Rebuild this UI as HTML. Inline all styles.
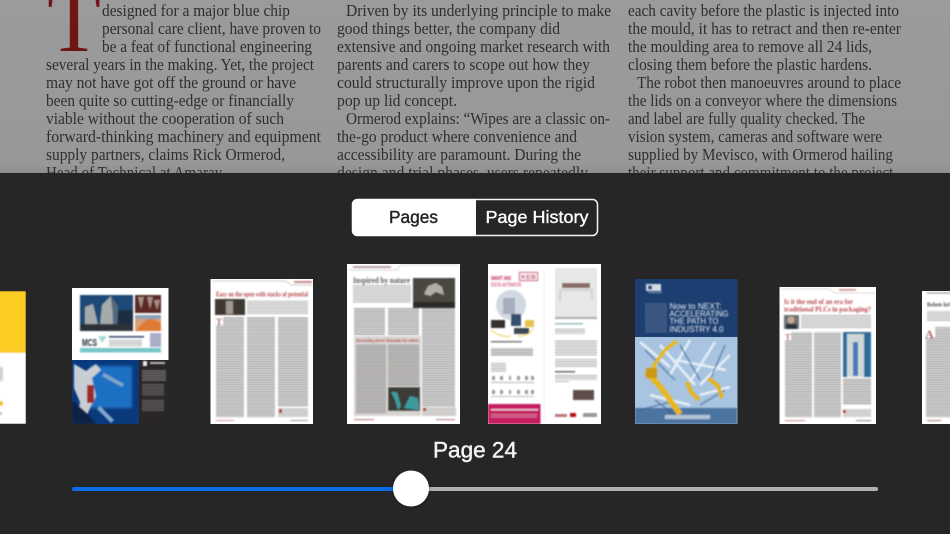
<!DOCTYPE html>
<html><head><meta charset="utf-8"><style>
html,body{margin:0;padding:0;background:#262626;width:950px;height:534px;overflow:hidden}
svg{display:block}
.t text{font-family:"Liberation Serif",serif;font-size:17px;fill:#2e2e2e}
.s{font-family:"Liberation Sans",sans-serif}
.h{font-family:"Liberation Serif",serif;font-weight:bold}
</style></head><body>
<svg width="950" height="534" viewBox="0 0 950 534" xmlns="http://www.w3.org/2000/svg">
<defs>
<pattern id="p" width="12" height="2.3" patternUnits="userSpaceOnUse"><rect width="12" height="1.2" fill="#8a8a8a"/></pattern>
<pattern id="q" width="12" height="2.3" patternUnits="userSpaceOnUse"><rect width="12" height="1.1" fill="#a8a8a8"/></pattern>
<pattern id="w" width="12" height="2.3" patternUnits="userSpaceOnUse"><rect width="12" height="1.1" fill="#e8e8e8"/></pattern>
<filter id="soft" x="-2%" y="-2%" width="104%" height="104%"><feGaussianBlur stdDeviation="0.25"/></filter>
<filter id="b" x="-5%" y="-5%" width="110%" height="110%"><feGaussianBlur stdDeviation="0.8"/></filter>
<filter id="bb" x="-15%" y="-15%" width="130%" height="130%"><feGaussianBlur stdDeviation="1.3"/></filter>
<filter id="ks" x="-30%" y="-30%" width="160%" height="160%"><feDropShadow dx="0" dy="1" stdDeviation="1.5" flood-color="#000" flood-opacity=".4"/></filter>
<clipPath id="top"><rect width="950" height="173"/></clipPath>
<clipPath id="c1"><rect x="0" y="291" width="26" height="133"/></clipPath>
<clipPath id="c2"><rect x="72" y="288" width="96.500" height="136"/></clipPath>
<clipPath id="c3"><rect x="210.500" y="279" width="102.500" height="145"/></clipPath>
<clipPath id="c4"><rect x="347" y="264" width="113" height="160"/></clipPath>
<clipPath id="c5"><rect x="488" y="264" width="113" height="160"/></clipPath>
<clipPath id="c6"><rect x="635" y="279" width="102.500" height="145"/></clipPath>
<clipPath id="c7"><rect x="779.500" y="287" width="96.500" height="137"/></clipPath>
<clipPath id="c8"><rect x="922" y="291" width="28" height="133"/></clipPath>
<linearGradient id="tg" x1="0" y1="0" x2="0" y2="1"><stop offset="0" stop-color="#9b9b9b"/><stop offset=".95" stop-color="#989898"/><stop offset="1" stop-color="#8e8e8e"/></linearGradient>
</defs>

<rect width="950" height="534" fill="#262626"/>
<rect width="950" height="173" fill="url(#tg)"/>

<g clip-path="url(#top)"><g class="t" filter="url(#soft)">
<text x="74" y="51" text-anchor="middle" style="font-size:88px;fill:#6e1219">T</text>
<text x="102" y="16" textLength="188" lengthAdjust="spacingAndGlyphs">designed for a major blue chip</text>
<text x="102" y="34" textLength="219" lengthAdjust="spacingAndGlyphs">personal care client, have proven to</text>
<text x="102" y="52" textLength="210" lengthAdjust="spacingAndGlyphs">be a feat of functional engineering</text>
<text x="46" y="70" textLength="268" lengthAdjust="spacingAndGlyphs">several years in the making. Yet, the project</text>
<text x="46" y="88" textLength="250" lengthAdjust="spacingAndGlyphs">may not have got off the ground or have</text>
<text x="46" y="106" textLength="248" lengthAdjust="spacingAndGlyphs">been quite so cutting-edge or financially</text>
<text x="46" y="124" textLength="238" lengthAdjust="spacingAndGlyphs">viable without the cooperation of such</text>
<text x="46" y="142" textLength="275" lengthAdjust="spacingAndGlyphs">forward-thinking machinery and equipment</text>
<text x="46" y="160" textLength="239" lengthAdjust="spacingAndGlyphs">supply partners, claims Rick Ormerod,</text>
<text x="46" y="178" textLength="179" lengthAdjust="spacingAndGlyphs">Head of Technical at Amaray.</text>

<text x="346" y="16" textLength="265" lengthAdjust="spacingAndGlyphs">Driven by its underlying principle to make</text>
<text x="337" y="34" textLength="223" lengthAdjust="spacingAndGlyphs">good things better, the company did</text>
<text x="337" y="52" textLength="273" lengthAdjust="spacingAndGlyphs">extensive and ongoing market research with</text>
<text x="337" y="70" textLength="253" lengthAdjust="spacingAndGlyphs">parents and carers to scope out how they</text>
<text x="337" y="88" textLength="258" lengthAdjust="spacingAndGlyphs">could structurally improve upon the rigid</text>
<text x="337" y="106" textLength="120" lengthAdjust="spacingAndGlyphs">pop up lid concept.</text>
<text x="346" y="124" textLength="264" lengthAdjust="spacingAndGlyphs">Ormerod explains: “Wipes are a classic on-</text>
<text x="337" y="142" textLength="240" lengthAdjust="spacingAndGlyphs">the-go product where convenience and</text>
<text x="337" y="160" textLength="244" lengthAdjust="spacingAndGlyphs">accessibility are paramount. During the</text>
<text x="337" y="178" textLength="251" lengthAdjust="spacingAndGlyphs">design and trial phases, users repeatedly</text>

<text x="628" y="16" textLength="271" lengthAdjust="spacingAndGlyphs">each cavity before the plastic is injected into</text>
<text x="628" y="34" textLength="273" lengthAdjust="spacingAndGlyphs">the mould, it has to retract and then re-enter</text>
<text x="628" y="52" textLength="244" lengthAdjust="spacingAndGlyphs">the moulding area to remove all 24 lids,</text>
<text x="628" y="70" textLength="244" lengthAdjust="spacingAndGlyphs">closing them before the plastic hardens.</text>
<text x="637" y="88" textLength="264" lengthAdjust="spacingAndGlyphs">The robot then manoeuvres around to place</text>
<text x="628" y="106" textLength="269" lengthAdjust="spacingAndGlyphs">the lids on a conveyor where the dimensions</text>
<text x="628" y="124" textLength="237" lengthAdjust="spacingAndGlyphs">and label are fully quality checked. The</text>
<text x="628" y="142" textLength="254" lengthAdjust="spacingAndGlyphs">vision system, cameras and software were</text>
<text x="628" y="160" textLength="265" lengthAdjust="spacingAndGlyphs">supplied by Mevisco, with Ormerod hailing</text>
<text x="628" y="178" textLength="269" lengthAdjust="spacingAndGlyphs">their support and commitment to the project.</text>
</g></g>

<!-- segmented control -->
<rect x="352.500" y="199.500" width="245" height="36" rx="5" fill="#262626" stroke="#f4f4f4" stroke-width="1.500"/>
<path d="M357 199H476V236H357a5 5 0 0 1-5-5V204a5 5 0 0 1 5-5z" fill="#fff"/>
<text class="s" x="413.500" y="223" text-anchor="middle" font-size="17.500" fill="#222" stroke="#222" stroke-width=".4" textLength="49" lengthAdjust="spacingAndGlyphs">Pages</text>
<text class="s" x="485.500" y="223" font-size="17.500" fill="#fff" stroke="#fff" stroke-width=".35" textLength="103" lengthAdjust="spacingAndGlyphs">Page History</text>

<!-- thumb 1 -->
<g clip-path="url(#c1)"><g filter="url(#b)">
<rect x="-4" y="291" width="30" height="133" fill="#fff"/>
<rect x="-4" y="291" width="30" height="62" fill="#fdcb22"/>
<rect x="-4" y="367" width="7" height="14" fill="#d2d2d2"/>
<rect x="-4" y="401" width="7" height="5" fill="#f5c62c"/>
<rect x="-4" y="412" width="6" height="3" fill="#c4c4c4"/>
</g></g>

<!-- thumb 2 -->
<g clip-path="url(#c2)">
<rect x="72" y="288" width="96.500" height="72" fill="#fff"/>
<g filter="url(#b)">
<rect x="80" y="295" width="53" height="36" fill="#1f4a74"/>
<path d="M85 325l0-18 8-3 5 21zM100 325l2-20 9-9 3 29z" fill="#a4abac"/>
<path d="M112 297l6 10-1 18-4 0z" fill="#56697a"/>
<rect x="118" y="310" width="15" height="17" fill="#1f2f40"/>
<rect x="80" y="324" width="53" height="7" fill="#2a3038"/>
<rect x="135" y="295" width="26" height="18" fill="#5b2a25"/>
<path d="M138 297l3 12 3-12zM147 297l3 12 3-12zM154 300l3 10 3-10z" fill="#a88d85"/>
<rect x="135" y="315" width="26" height="16" fill="#d6a078"/>
<path d="M135 331l14-14 12 6v8z" fill="#dd7a36"/>
<rect x="135" y="315" width="26" height="4" fill="#8ba3b5"/>
<text class="s" x="82" y="346" font-size="10" font-weight="bold" fill="#1e2a33" textLength="15" lengthAdjust="spacingAndGlyphs">MCS</text>
<path d="M98 336l9 0-5 7z" fill="#a8dadd"/>
<rect x="109" y="336" width="35" height="1.600" fill="#3a4570"/>
<rect x="109" y="339" width="33" height="7" fill="url(#q)"/>
<rect x="150" y="333" width="11" height="14" fill="#a9aec7"/>
<rect x="80" y="348" width="81" height="4.500" fill="#76c6c8"/>
</g>
<rect x="72" y="360" width="67" height="64" fill="#0b3a7c"/>
<rect x="139" y="360" width="29.500" height="64" fill="#2b2626"/>
<g filter="url(#b)">
<rect x="90" y="366" width="42" height="42" fill="#1b6fc4" filter="url(#bb)"/>
<path d="M74 364l12 7 10-7 5 6-9 8 4 18-5 10-8 18-6 0 3-22-6-14z" fill="#c9ced4"/>
<rect x="87" y="385" width="7" height="18" fill="#9b2a2a"/>
<path d="M72 400l16 14 8 10h-24z" fill="#0c2244"/>
<path d="M104 373l20 11-2 3-20-11zM100 406l14 14-3 3-14-14z" fill="#7fa6c9"/>
<rect x="143" y="361" width="4" height="5" fill="#eee"/>
<rect x="150" y="362" width="15" height="2" fill="#bbb"/>
<rect x="142" y="370" width="24" height="11" fill="url(#w)" opacity=".5"/>
<rect x="142" y="384" width="22" height="12" fill="url(#w)" opacity=".4"/>
<rect x="142" y="399" width="22" height="12" fill="url(#w)" opacity=".4"/>
</g>
</g>

<!-- thumb 3 -->
<g clip-path="url(#c3)">
<rect x="210.500" y="279" width="102.500" height="145" fill="#fff"/>
<g filter="url(#b)">
<path d="M212 281H286L291 285H312" stroke="#bbb" stroke-width=".7" fill="none"/>
<rect x="294" y="281" width="18" height="2" fill="#c9888a"/>
<text class="h" x="216" y="296.500" font-size="7" fill="#b8474b" textLength="92" lengthAdjust="spacingAndGlyphs">Easy on the open with stacks of potential</text>
<rect x="215" y="299" width="30" height="16" fill="#3d3733"/>
<rect x="226" y="301" width="7" height="13" fill="#a09890"/>
<rect x="247" y="300" width="61" height="14" fill="url(#q)"/>
<rect x="216" y="317" width="28" height="100" fill="url(#p)"/>
<rect x="247" y="317" width="28" height="100" fill="url(#p)"/>
<rect x="278" y="317" width="30" height="90" fill="url(#p)"/>
<rect x="216" y="317" width="7" height="8" fill="#fff"/>
<text class="h" x="216" y="325" font-size="9" fill="#a33">T</text>
<rect x="278" y="408" width="30" height="9" fill="#cfcfcf"/>
<rect x="279" y="409" width="3" height="4" fill="#b22"/>
<rect x="216" y="420" width="18" height="1" fill="#c99"/>
<rect x="290" y="420" width="18" height="1" fill="#999"/>
</g></g>

<!-- thumb 4 -->
<g clip-path="url(#c4)">
<rect x="347" y="264" width="113" height="160" fill="#fff"/>
<g filter="url(#b)">
<path d="M349 270H397L401 265H458" stroke="#ccc" stroke-width=".7" fill="none"/>
<rect x="353" y="266" width="38" height="2" fill="#b9a0a0"/>
<text class="h" x="353" y="283" font-size="8.500" fill="#555" textLength="57" lengthAdjust="spacingAndGlyphs">Inspired by nature</text>
<rect x="413" y="278" width="42" height="30" fill="#4a4640"/>
<path d="M424 294l4-8 8-3 6 4 2 8-8-3-6 4z" fill="#b0aea8"/>
<rect x="413" y="302" width="42" height="6" fill="#2c2a27"/>
<rect x="353" y="285" width="58" height="18" fill="url(#q)"/>
<rect x="354" y="308" width="31" height="27" fill="url(#p)"/>
<rect x="388" y="308" width="31" height="27" fill="url(#p)"/>
<rect x="422" y="308" width="33" height="100" fill="url(#p)"/>
<rect x="354" y="336" width="67" height="80" fill="#d8d5d3"/>
<text class="h" x="356" y="342" font-size="5.500" fill="#b2423f" textLength="63" lengthAdjust="spacingAndGlyphs">Increasing power demands for robots</text>
<rect x="356" y="344" width="30" height="70" fill="url(#p)"/>
<rect x="388" y="344" width="31" height="42" fill="url(#p)"/>
<rect x="388" y="387" width="32" height="24" fill="#3d3a34"/>
<path d="M391 392l6 0 4 14-3 4-3-10zM404 408l6-12 8 2 1 12z" fill="#3c9ba0"/>
<rect x="422" y="407" width="34" height="9" fill="#d0cdcc"/>
<rect x="423" y="408" width="3" height="3" fill="#b22"/>
<rect x="354" y="419" width="20" height="1.200" fill="#b88"/>
<rect x="436" y="419" width="19" height="1.200" fill="#b88"/>
</g></g>

<!-- thumb 5 -->
<g clip-path="url(#c5)">
<rect x="488" y="264" width="113" height="160" fill="#fff"/>
<g filter="url(#b)">
<text class="s" x="491" y="280" font-size="5.500" font-weight="bold" fill="#c2255e" textLength="20" lengthAdjust="spacingAndGlyphs">SMART AND</text>
<text class="s" x="491" y="286.500" font-size="5" fill="#c2255e" textLength="30" lengthAdjust="spacingAndGlyphs">DIGITAL AUTOMATION</text>
<rect x="519.500" y="272.500" width="18" height="8" fill="#fff" stroke="#c2255e" stroke-width="1"/>
<text class="s" x="521" y="279" font-size="6.500" font-weight="bold" fill="#c2255e" textLength="15" lengthAdjust="spacingAndGlyphs">KEB</text>
<ellipse cx="511" cy="305" rx="15" ry="15" fill="#d2d8e2"/>
<rect x="503" y="298" width="12" height="16" fill="#a6aebb"/>
<rect x="491" y="320" width="14" height="8" fill="#35332f"/>
<rect x="511" y="314" width="10" height="12" fill="#34506e"/>
<rect x="525" y="320" width="9" height="7" fill="#e6c24f"/>
<rect x="514" y="328" width="15" height="6" fill="#3c4a52"/>
<path d="M491 330q10 8 20 6M518 336q12 0 15-8" stroke="#e8cf48" stroke-width="1" fill="none"/>
<rect x="491" y="341" width="31" height="1.500" fill="#777"/>
<rect x="491" y="348" width="42" height="8" fill="url(#p)"/>
<rect x="491" y="362" width="15" height="10" fill="url(#q)"/>
<g fill="#999"><rect x="492" y="376" width="3" height="4"/><rect x="500" y="376" width="3" height="4"/><rect x="509" y="376" width="2" height="4"/><rect x="517" y="376" width="3" height="4"/><rect x="525" y="376" width="3" height="4"/><rect x="531" y="376" width="3" height="4"/><rect x="492" y="390" width="3" height="4"/><rect x="500" y="390" width="3" height="4"/><rect x="509" y="390" width="2" height="4"/><rect x="517" y="390" width="3" height="4"/><rect x="525" y="390" width="3" height="4"/><rect x="531" y="390" width="3" height="4"/></g>
<rect x="491" y="382" width="43" height="2" fill="url(#q)"/>
<rect x="491" y="396" width="43" height="2" fill="url(#q)"/>
<rect x="488" y="404" width="52.500" height="20" fill="#c51f60"/>
<rect x="491" y="409" width="47" height="1.500" fill="#f0c8d8"/>
<rect x="491" y="414" width="46" height="4" fill="url(#w)" opacity=".5"/>
<rect x="544" y="270" width=".7" height="150" fill="#e4e4e4"/>
<rect x="555" y="268" width="42" height="51" fill="#e6e7e7"/>
<rect x="562" y="283" width="28" height="5" fill="#8a6a64"/>
<path d="M560 290h32v10M560 290v12" stroke="#c8c8c8" stroke-width="1.200" fill="none"/>
<rect x="555" y="317" width="42" height="2" fill="#aaa"/>
<rect x="555" y="323" width="28" height="1.500" fill="#9bb"/>
<rect x="555" y="328" width="30" height="6" fill="url(#q)"/>
<rect x="555" y="340" width="42" height="16" fill="url(#q)"/>
<rect x="555" y="359" width="42" height="9" fill="url(#q)"/>
<rect x="555" y="371" width="20" height="1.500" fill="#666"/>
<rect x="555" y="375" width="42" height="5" fill="url(#q)"/>
<rect x="555" y="381" width="14" height="1" fill="#bbb"/>
<rect x="573" y="390" width="21" height="10" fill="#5f4f4b"/>
<rect x="555" y="414" width="12" height="3" fill="#b77"/>
<rect x="570" y="413" width="6" height="4" fill="#b11"/>
<rect x="583" y="413" width="14" height="4" fill="#999"/>
</g></g>

<!-- thumb 6 -->
<g clip-path="url(#c6)">
<rect x="635" y="279" width="102.500" height="58" fill="#1d3e70"/>
<rect x="635" y="337" width="102.500" height="87" fill="#a9c4e0"/>
<g filter="url(#b)">
<rect x="646" y="284" width="15" height="7" fill="#d7dde6"/>
<rect x="648" y="285.500" width="4" height="4" fill="#1d3e70"/>
<rect x="648" y="292" width="14" height="1" fill="#8fa0bb"/>
<rect x="645" y="303" width="22" height="30" fill="url(#w)" opacity=".3"/>
<g fill="#eef2f7" font-family="Liberation Sans,sans-serif" font-size="8.500">
<text x="669.500" y="309" textLength="52" lengthAdjust="spacingAndGlyphs">Now to NEXT:</text>
<text x="669.500" y="316.500" textLength="59" lengthAdjust="spacingAndGlyphs">ACCELERATING</text>
<text x="669.500" y="324" textLength="49" lengthAdjust="spacingAndGlyphs">THE PATH TO</text>
<text x="669.500" y="332" textLength="54" lengthAdjust="spacingAndGlyphs">INDUSTRY 4.0</text>
</g>
<g stroke="#e6eff8" stroke-width="2.500" fill="none">
<path d="M640 342l30 25M660 345l35 40M690 340l-20 35M715 342l-25 40M730 355l-30 30M650 395l40 10M700 395l30-8M676 360l50 10"/>
</g>
<g stroke="#5f86b0" stroke-width="1.500" fill="none">
<path d="M645 350l30 30M680 345l20 35M725 345l-15 35M700 405l25-15M655 400l20 15M640 410l30-8"/>
</g>
<rect x="635" y="408" width="102" height="16" fill="#34608f" opacity=".8"/>
<path d="M648 378l7-14 10-14 12-9" stroke="#eab71e" stroke-width="3.500" fill="none"/>
<path d="M646 372l12 12 12 16 10 14" stroke="#eab71e" stroke-width="5.500" fill="none"/>
<rect x="646" y="368" width="11" height="10" fill="#c99a14"/>
<path d="M687 382l4 10 8 8M708 378l10 8 4 12" stroke="#e5b41d" stroke-width="4" fill="none"/>
<rect x="665" y="415" width="45" height="4" fill="#dfe7ef" opacity=".7"/>
</g></g>

<!-- thumb 7 -->
<g clip-path="url(#c7)">
<rect x="779.500" y="287" width="96.500" height="137" fill="#fff"/>
<g filter="url(#b)">
<path d="M781 289H830L835 293H875" stroke="#ccc" stroke-width=".7" fill="none"/>
<rect x="839" y="289" width="17" height="1.600" fill="#c88"/>
<text class="h" x="784" y="304" font-size="7.500" fill="#b8474b" textLength="69" lengthAdjust="spacingAndGlyphs">Is it the end of an era for</text>
<text class="h" x="784" y="311.500" font-size="7.500" fill="#b8474b" textLength="87" lengthAdjust="spacingAndGlyphs">traditional PLCs in packaging?</text>
<rect x="784" y="315" width="15" height="14" fill="#6f7378"/>
<circle cx="791" cy="320" r="3.500" fill="#c5a894"/>
<rect x="786" y="324" width="11" height="5" fill="#2c3440"/>
<rect x="801" y="315" width="70" height="14" fill="url(#q)"/>
<rect x="785" y="332" width="27" height="85" fill="url(#p)"/>
<rect x="814" y="332" width="27" height="85" fill="url(#p)"/>
<rect x="785" y="332" width="6" height="8" fill="#fff"/>
<text class="h" x="785" y="339.500" font-size="8.500" fill="#a33">T</text>
<rect x="843" y="332" width="28" height="45" fill="#2f6d9b"/>
<rect x="847" y="334" width="17" height="43" fill="#cfd8d8"/>
<rect x="853" y="342" width="5" height="34" fill="#4478bc"/>
<rect x="843" y="378" width="28" height="27" fill="url(#p)"/>
<rect x="843" y="409" width="28" height="8" fill="#d2d2d2"/>
<rect x="843" y="410" width="3" height="3" fill="#b22"/>
<rect x="785" y="420" width="20" height="1.200" fill="#c99"/>
<rect x="856" y="420" width="15" height="1.200" fill="#999"/>
</g></g>

<!-- thumb 8 -->
<g clip-path="url(#c8)">
<rect x="922" y="291" width="30" height="133" fill="#fff"/>
<g filter="url(#b)">
<rect x="927" y="292" width="26" height="2" fill="#bbb"/>
<text class="h" x="927" y="306.500" font-size="6.500" fill="#444" textLength="23" lengthAdjust="spacingAndGlyphs">Robots hel</text>
<rect x="927" y="311" width="26" height="10" fill="url(#q)"/>
<rect x="926" y="327" width="28" height="90" fill="url(#p)"/>
<rect x="925" y="326" width="10" height="12" fill="#fff"/>
<text class="h" x="925" y="338" font-size="12" fill="#a33">A</text>
<rect x="927" y="420" width="14" height="1.200" fill="#b88"/>
</g></g>

<!-- label + slider -->
<text class="s" x="475" y="457.500" text-anchor="middle" font-size="22.500" fill="#f2f2f2" stroke="#f2f2f2" stroke-width=".45" textLength="84" lengthAdjust="spacingAndGlyphs">Page 24</text>
<rect x="410" y="487" width="468" height="4" rx="2" fill="#b0b0b0"/>
<rect x="72" y="487" width="340" height="4" rx="2" fill="#0a6fe6"/>
<circle cx="411" cy="488.500" r="18" fill="#fff" filter="url(#ks)"/>
</svg>
</body></html>
